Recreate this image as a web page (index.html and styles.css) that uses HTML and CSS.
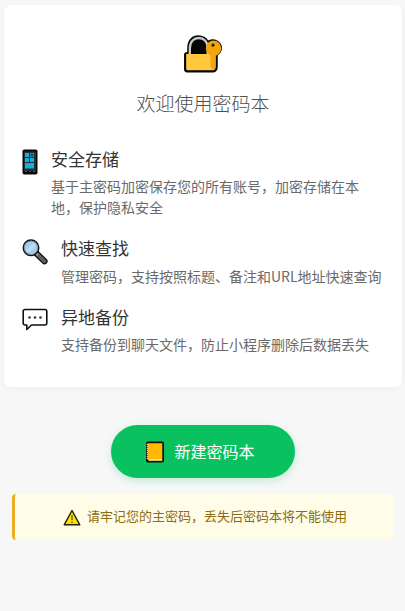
FILE: index.html
```html
<!DOCTYPE html>
<html lang="zh-CN">
<head>
<meta charset="utf-8">
<title>密码本</title>
<link rel="stylesheet" href="styles.css">
</head>
<body>
<main class="card">
  <header class="hero">
    <svg class="lock" width="40" height="40" viewBox="1 1 38 38">
      <path d="M5 18V15C5 6 10 2.300 15.500 2.300C20 2.300 23 4.300 25 7.200A8.200 8.200 0 1 1 34 21.500V32Q34 37.500 29 37.500H5Q2 37.500 2 34.500V20.500Q2 18 5 18Z" fill="#050505"/>
      <path d="M7.500 20V14.500C7.500 8 11.500 4.800 16 4.800S24.500 8 24.500 14.500V20" fill="none" stroke="#c9c9ce" stroke-width="2.200"/>
      <path d="M4 20H32V32Q32 35.500 28.500 35.500H5.500Q4 35.500 4 34Z" fill="#ffc83d"/>
      <path d="M27 20H32V32Q32 34.500 30 35.200L27 32Z" fill="#f2a513"/>
      <circle cx="30" cy="14.500" r="7.300" fill="#f3a40c"/>
      <circle cx="29.500" cy="11.500" r="1.500" fill="#24180a"/>
    </svg>
    <h1 class="heading">欢迎使用密码本</h1>
  </header>
  <section class="features">
    <article class="feature">
      <svg class="icon" width="16" height="26" viewBox="0 0 16 26">
        <rect x=".5" y=".5" width="15" height="25" rx="1.800" fill="#080808"/>
        <rect x="2" y="2.500" width="12" height="19.500" fill="#232f35"/>
        <path d="M3 4H7V8H3ZM3 9H7V13H3ZM8 9H12V13H8ZM3 14H12V19.500H3Z" fill="#17aee0"/>
        <path d="M8 4H9.500V5.500H8ZM10.500 4H12V5.500H10.500ZM8 6.500H9.500V8H8ZM10.500 6.500H12V8H10.500Z" fill="#17aee0"/>
        <path d="M3 22.500H5M7.500 22.500H9M11 22.500H13" stroke="#555" stroke-width="1"/>
      </svg>
      <div class="copy"><h2 class="name">安全存储</h2><p class="desc">基于主密码加密保存您的所有账号，加密存储在本地，保护隐私安全</p></div>
    </article>
    <article class="feature">
      <svg class="icon" width="26" height="26" viewBox="0 0 26 26">
        <path d="M13 13L22.500 22.300" stroke="#111" stroke-width="6.200" stroke-linecap="round"/>
        <path d="M15.500 15.500L22.300 22.200" stroke="#5d5d61" stroke-width="3.800" stroke-linecap="round"/>
        <path d="M12.500 12.500L16 16" stroke="#aaa" stroke-width="2.200"/>
        <circle cx="9" cy="8.800" r="7.800" fill="#a5cdf2" stroke="#111" stroke-width="1.400"/>
        <circle cx="9" cy="8.800" r="6.700" fill="none" stroke="#777f86" stroke-width=".8"/>
        <path d="M4 11.500L11.500 4L14 7L6.500 14Z" fill="#c8e2fa" opacity=".65"/>
      </svg>
      <div class="copy"><h2 class="name">快速查找</h2><p class="desc">管理密码，支持按照标题、备注和URL地址快速查询</p></div>
    </article>
    <article class="feature">
      <svg class="icon" width="26" height="26" viewBox="0 0 26 26">
        <path d="M3 2.500H23Q24.800 2.500 24.800 4.500V16Q24.800 18 23 18H9.500L4.800 22.500V18H3Q1.200 18 1.200 16V4.500Q1.200 2.500 3 2.500Z" fill="#fff" stroke="#111" stroke-width="1.600" stroke-linejoin="round"/>
        <circle cx="7.500" cy="10.500" r="1.300" fill="#333"/><circle cx="13" cy="10.500" r="1.300" fill="#333"/><circle cx="18.500" cy="10.500" r="1.300" fill="#333"/>
      </svg>
      <div class="copy"><h2 class="name">异地备份</h2><p class="desc">支持备份到聊天文件，防止小程序删除后数据丢失</p></div>
    </article>
  </section>
</main>
<button class="create" type="button">
  <svg width="20" height="22" viewBox="0 0 20 22">
    <rect x="1" y=".5" width="18" height="21" rx="1.800" fill="#111"/>
    <path d="M2.500 2.200H17.300V19.800H4.500Q2.500 19.800 2.500 18Z" fill="#ffb900"/>
    <path d="M4 18.900H17" stroke="#fff0c5" stroke-width="1.200"/>
    <path d="M2.500 3V18" stroke="#e8d9a8" stroke-width="1.500" stroke-dasharray="1 1"/>
  </svg>
  <span>新建密码本</span>
</button>
<aside class="notice">
  <svg width="18" height="17" viewBox="0 0 18 17">
    <path d="M9 1.500L16.800 15.800H1.200Z" fill="#fce100" stroke="#222006" stroke-width="1.400" stroke-linejoin="round"/>
    <path d="M9 6V11.300M9 12.500V14" stroke="#74630a" stroke-width="1.400"/>
  </svg>
  <span>请牢记您的主密码，丢失后密码本将不能使用</span>
</aside>
</body>
</html>
```
FILE: styles.css
```css
* { box-sizing: border-box; }
body {
  margin: 0;
  height: 611px;
  padding: 5px 3px 0 4px;
  display: flex;
  flex-direction: column;
  background: #f7f7f8;
  font-family: "Noto Sans CJK SC", sans-serif;
  font-weight: 400;
}
h1, h2, p { margin: 0; font-weight: inherit; }
svg { display: block; flex: none; }
.card {
  height: 382px;
  padding: 29px 18px 0;
  border-radius: 7px;
  background: #fff;
  box-shadow: 0 2px 8px rgba(0, 0, 0, .035);
}
.hero { display: flex; flex-direction: column; align-items: center; }
.heading { margin-top: 15px; font-size: 19px; line-height: 28px; color: #505050; font-weight: 300; }
.features { margin-top: 29.5px; display: flex; flex-direction: column; gap: 18px; }
.feature { display: flex; gap: 13px; }
.icon { margin-top: 2.5px; }
.copy { flex: 1; min-width: 0; }
.name { margin-bottom: 5.5px; font-size: 17px; line-height: 24px; color: #333; }
.desc { font-size: 14px; line-height: 21px; color: #6a6a6a; }
.create {
  width: 184px;
  height: 53px;
  margin: 38px 0 0 107px;
  padding: 0 6px 0 0;
  display: flex;
  align-items: center;
  justify-content: center;
  gap: 9px;
  border: 0;
  border-radius: 27px;
  background: #0ac160;
  box-shadow: 0 3px 8px rgba(7, 193, 96, .22);
  color: #fff;
  font: inherit;
  font-size: 16px;
}
.create span { position: relative; top: -1px; }
.notice {
  height: 46px;
  margin: 16px 9px 0 8px;
  padding-left: 2px;
  display: flex;
  align-items: center;
  justify-content: center;
  gap: 6px;
  border-left: 3px solid #efad24;
  border-radius: 4px;
  background: #fffde7;
  color: #8d6c12;
  font-size: 13px;
}
.notice span { line-height: 20px; position: relative; top: -1px; }
```
